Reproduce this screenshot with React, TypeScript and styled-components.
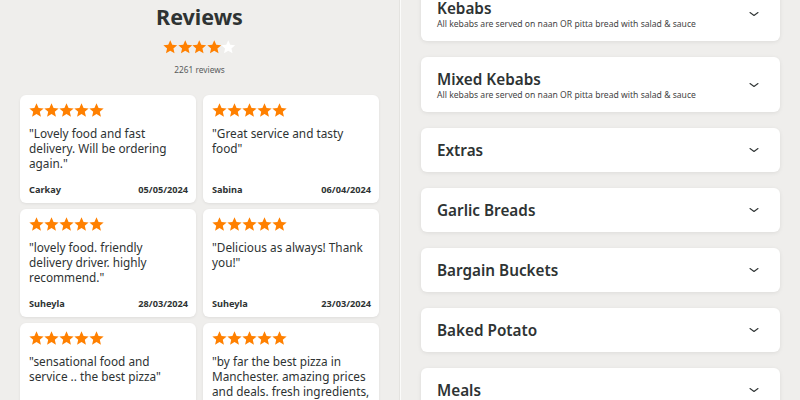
import styled, { createGlobalStyle } from 'styled-components'

const GlobalStyle = createGlobalStyle`
	html, body {
		margin: 0;
		padding: 0;
		background: #efeeec;
		font-family: 'Noto Sans', 'Open Sans', sans-serif;
		color: #2e3333;
		overflow: hidden;
	}
`

const reviews = [
	{ text: '"Lovely food and fast delivery. Will be ordering again."', name: 'Carkay', date: '05/05/2024' },
	{ text: '"Great service and tasty food"', name: 'Sabina', date: '06/04/2024' },
	{ text: '"lovely food. friendly delivery driver. highly recommend."', name: 'Suheyla', date: '28/03/2024' },
	{ text: '"Delicious as always! Thank you!"', name: 'Suheyla', date: '23/03/2024' },
	{ text: '"sensational food and service .. the best pizza"', name: 'Anon', date: '20/03/2024' },
	{ text: '"by far the best pizza in Manchester. amazing prices and deals. fresh ingredients, lovely staff"', name: 'Anon', date: '18/03/2024' },
]

const categories = [
	{ title: 'Kebabs', sub: 'All kebabs are served on naan OR pitta bread with salad & sauce' },
	{ title: 'Mixed Kebabs', sub: 'All kebabs are served on naan OR pitta bread with salad & sauce' },
	{ title: 'Extras' },
	{ title: 'Garlic Breads' },
	{ title: 'Bargain Buckets' },
	{ title: 'Baked Potato' },
	{ title: 'Meals' },
	{ title: 'Drinks' },
]

const Page = styled.div`
	display: flex;
	width: 800px;
	height: 400px;
	overflow: hidden;
`

const ReviewsPanel = styled.section`
	width: 399px;
	flex-shrink: 0;
	padding: 4px 20px 0;
	box-sizing: border-box;
	display: flex;
	flex-direction: column;
	align-items: center;
`

const Divider = styled.div`
	width: 2px;
	flex-shrink: 0;
	background: #fbfbfa;
	border-left: 1px solid #e4e3e0;
	box-sizing: border-box;
`

const Title = styled.h2`
	margin: 0;
	font-size: 21.5px;
	line-height: 26px;
	font-weight: 700;
`

const StarRow = styled.div<{ $size: number; $top?: number }>`
	display: flex;
	margin-top: ${(p) => p.$top ?? 0}px;
	svg {
		width: ${(p) => p.$size}px;
		height: ${(p) => p.$size}px;
		display: block;
	}
`

const Count = styled.div`
	margin-top: 9px;
	font-size: 8.3px;
	line-height: 12px;
	color: #585c5c;
`

const Grid = styled.div`
	margin-top: 19px;
	display: grid;
	grid-template-columns: 176px 176px;
	gap: 6px 7px;
	align-self: stretch;
`

const ReviewCard = styled.article`
	background: #fff;
	border-radius: 6px;
	box-shadow: 0 1px 3px rgba(0, 0, 0, 0.07);
	height: 108px;
	padding: 8px 8px 7px 9px;
	box-sizing: border-box;
	display: flex;
	flex-direction: column;
`

const Quote = styled.p`
	margin: 8px 0 0;
	font-size: 11.8px;
	line-height: 15px;
	flex: 1;
`

const Meta = styled.div`
	display: flex;
	justify-content: space-between;
	font-size: 9.2px;
	font-weight: 700;
	line-height: 12px;
`

const MenuPanel = styled.section`
	flex: 1;
	padding: 0 20px;
	display: flex;
	flex-direction: column;
	gap: 16px;
	margin-top: -14px;
`

const CategoryCard = styled.div<{ $tall: boolean }>`
	background: #fff;
	border-radius: 6px;
	box-shadow: 0 1px 4px rgba(0, 0, 0, 0.08);
	height: ${(p) => (p.$tall ? 55 : 44)}px;
	flex-shrink: 0;
	display: flex;
	align-items: center;
	padding: 0 20px 0 16px;
	box-sizing: border-box;
`

const CategoryText = styled.div`
	flex: 1;
	display: flex;
	flex-direction: column;
`

const CategoryTitle = styled.div`
	font-size: 15.3px;
	font-weight: 600;
	line-height: 20px;
`

const CategorySub = styled.div`
	font-size: 8.6px;
	line-height: 12px;
	color: #444;
`

const Chevron = styled.svg`
	width: 12px;
	height: 12px;
	flex-shrink: 0;
`

const Star = ({ color }: { color: string }) => (
	<svg viewBox='1.5 1.8 21 21'>
		<path
			d='M12 2.2l2.9 6.6 7.1.6-5.4 4.7 1.6 7-6.2-3.8-6.2 3.8 1.6-7L2 9.4l7.1-.6z'
			fill={color}
		/>
	</svg>
)

const Stars = ({ count, size, top }: { count: number; size: number; top?: number }) => (
	<StarRow $size={size} $top={top}>
		{[0, 1, 2, 3, 4].map((i) => (
			<Star key={i} color={i < count ? '#ff8000' : '#ffffff'} />
		))}
	</StarRow>
)

const App = () => {
	return (
		<>
			<GlobalStyle />
			<Page>
				<ReviewsPanel>
					<Title>Reviews</Title>
					<Stars count={4} size={14.5} top={10} />
					<Count>2261 reviews</Count>
					<Grid>
						{reviews.map((r, i) => (
							<ReviewCard key={i}>
								<Stars count={5} size={15} />
								<Quote>{r.text}</Quote>
								<Meta>
									<span>{r.name}</span>
									<span>{r.date}</span>
								</Meta>
							</ReviewCard>
						))}
					</Grid>
				</ReviewsPanel>
				<Divider />
				<MenuPanel>
					{categories.map((c) => (
						<CategoryCard key={c.title} $tall={!!c.sub}>
							<CategoryText>
								<CategoryTitle>{c.title}</CategoryTitle>
								{c.sub && <CategorySub>{c.sub}</CategorySub>}
							</CategoryText>
							<Chevron viewBox='0 0 12 12'>
								<path d='M2 4.5l4 3 4-3' fill='none' stroke='#2e3333' strokeWidth='1.1' strokeLinecap='round' strokeLinejoin='round' />
							</Chevron>
						</CategoryCard>
					))}
				</MenuPanel>
			</Page>
		</>
	)
}

export default App
